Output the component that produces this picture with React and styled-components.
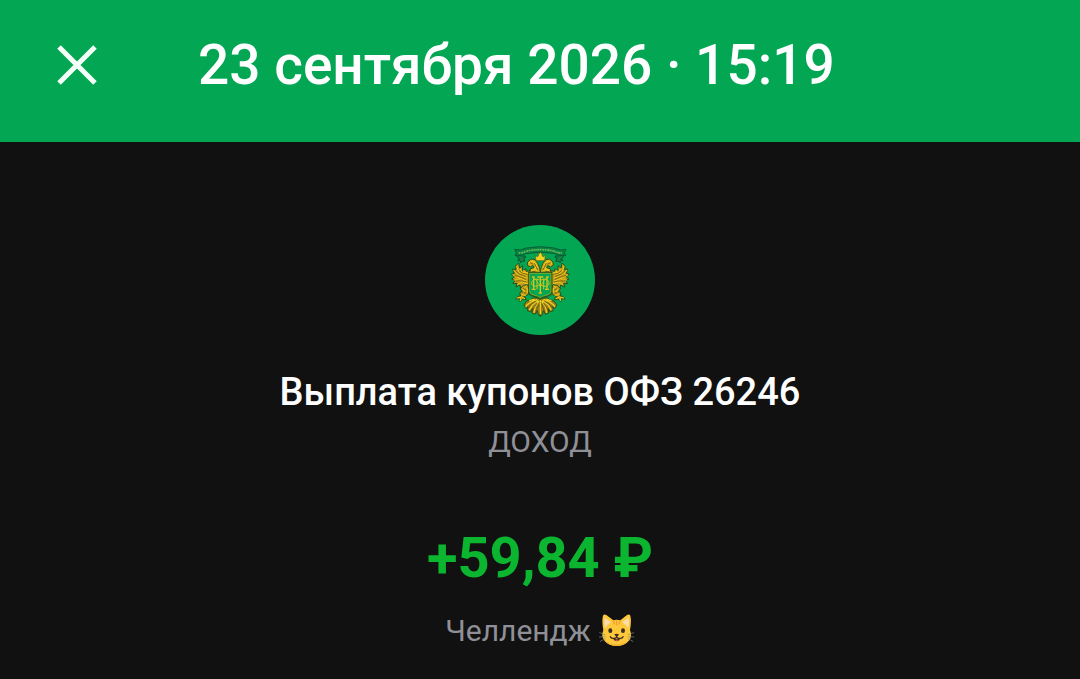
import React from 'react'
import styled, { createGlobalStyle } from 'styled-components'

const GlobalStyle = createGlobalStyle`
  * {
    box-sizing: border-box;
  }
  body {
    margin: 0;
    background: #111111;
    color: #ffffff;
    font-family: Roboto, 'Noto Sans', sans-serif;
  }
`

const Page = styled.div`
  display: flex;
  flex-direction: column;
  min-height: 100vh;
  border-bottom: 1px solid #000000;
`

const Header = styled.header`
  display: flex;
  align-items: center;
  gap: 88px;
  padding: 29px 44px 41px;
  background: #02a653;
`

const CloseButton = styled.button`
  display: flex;
  padding: 12px;
  border: none;
  background: none;
  color: #f4fff9;
  cursor: pointer;
`

const Title = styled.h1`
  margin: 0;
  font-size: 55px;
  font-weight: 500;
  line-height: 72px;
`

const Details = styled.main`
  display: flex;
  flex-direction: column;
  align-items: center;
  padding: 83px 24px 24px;
  text-align: center;
`

const Logo = styled.div`
  display: flex;
  width: 110px;
  height: 110px;
  border-radius: 50%;
  overflow: hidden;
  background: #02a653;
`

const Name = styled.h2`
  margin: 32px 0 0;
  font-size: 38px;
  font-weight: 500;
  line-height: 50px;
`

const Caption = styled.p`
  display: flex;
  align-items: center;
  gap: 8px;
  margin: 0;
  color: #8f9097;
  font-size: 30px;
  line-height: 50px;
`

const Amount = styled.p`
  margin: 55px 0 12px;
  color: #0cb52f;
  font-size: 56px;
  font-weight: 700;
  line-height: 72px;
`

const CloseIcon = () => (
  <svg width="42" height="42" viewBox="0 0 42 42" aria-hidden="true">
    <path d="M3 3L39 39M39 3L3 39" stroke="currentColor" strokeWidth="5" />
  </svg>
)

// one half of the eagle, the other one is mirrored
const EagleHalf = () => (
  <g strokeLinejoin="round" strokeLinecap="round">
    <path
      d="M154 151L139 154L137 146L128 153L128 137L119 145L116 129L107 137L108 149L98 147L103 160L94 162L103 171L95 177L105 181L99 191L111 190L108 201L120 195L122 205L131 198L136 206L148 194Z"
      fill="#c09c1b"
      stroke="#26511c"
      strokeWidth="3"
    />
    <path
      d="M110 139L117 158L139 166M101 151L114 165L139 174M99 165L114 173L139 183M102 180L117 180L142 190M114 193L127 186L144 194M120 146L125 156L143 160M131 151L134 157L148 161"
      fill="none"
      stroke="#edc91d"
      strokeWidth="3"
    />
    <path
      d="M107 152L118 162L136 169M105 167L118 169L137 178M108 183L121 182L139 186M119 153L128 160L142 163"
      fill="none"
      stroke="#5a4512"
      strokeWidth="2"
    />
    <path
      d="M181 160L160 160L149 155L152 146L162 143L159 136L151 141L142 136L143 126L153 117L165 119L173 130L178 142Z"
      fill="#d0ad19"
      stroke="#34501a"
      strokeWidth="3"
    />
    <path
      d="M147 129L156 123L165 128L172 142M155 151L168 149L176 154M168 141L163 147"
      fill="none"
      stroke="#f5d522"
      strokeWidth="3"
    />
    <path d="M151 128L158 132M164 131L173 150M157 155L165 154" fill="none" stroke="#473b12" strokeWidth="2" />
    <path
      d="M142 194L130 196L120 207L127 213L119 219L122 228L113 229L107 237L118 236L120 245L128 237L139 239L133 229L144 224L148 213Z"
      fill="#c09c18"
      stroke="#26511c"
      strokeWidth="3"
    />
    <path
      d="M139 199L127 209L134 213L126 224L137 226M111 234L124 231L134 236M141 205L142 217M121 236L121 242"
      fill="none"
      stroke="#ecca1c"
      strokeWidth="3"
    />
    <path d="M130 205L138 210M127 218L137 219M128 229L137 233" stroke="#57430f" strokeWidth="2" />
    <path
      d="M181 234L158 234L151 241L140 243L132 254L137 265L144 260L142 272L152 275L157 266L156 279L165 283L172 272L175 284L181 288Z"
      fill="#9c8219"
      stroke="#26511c"
      strokeWidth="3"
    />
    <path
      d="M170 239L153 246L142 254L138 260M173 242L157 255L149 269M176 244L166 260L162 277M162 238L149 242M181 240V281"
      fill="none"
      stroke="#f0d020"
      strokeWidth="4"
    />
    <path
      d="M168 244L151 255L145 263M171 250L160 266L157 274M177 252L170 270L168 279"
      fill="none"
      stroke="#584913"
      strokeWidth="2"
    />
    <path
      d="M116 105L112 110L117 116L113 122L122 121L121 128L128 123L134 124L132 115L138 111L132 106"
      fill="#08763e"
      stroke="#075833"
      strokeWidth="3"
    />
    <path d="M118 111L127 116M121 121L130 119" stroke="#39a350" strokeWidth="2" />
  </g>
)

const Emblem = () => (
  <svg width="110" height="110" viewBox="15 15 330 330" role="img" aria-label="Минфин">
    <EagleHalf />
    <g transform="translate(362 0) scale(-1 1)">
      <EagleHalf />
    </g>
    <path
      d="M104 88L121 90L139 84Q181 76 223 84L241 90L258 88L253 98L257 107L237 106L224 101Q181 92 138 101L125 106L105 107L109 98Z"
      fill="#088544"
      stroke="#075e36"
      strokeWidth="3"
      strokeLinejoin="round"
    />
    <path
      d="M116 99L128 98L142 93Q181 85 220 93L234 98L246 99"
      fill="none"
      stroke="#6fbd59"
      strokeWidth="5"
      strokeDasharray="4 2 2 1 5 2"
    />
    <path
      d="M168 122L166 105L172 111L176 105L174 100L178 101L181 97L184 101L188 100L186 105L190 111L196 105L194 122Z"
      fill="#f2d120"
      stroke="#4f661c"
      strokeWidth="2"
    />
    <path
      d="M147 158H215V217Q213 227 198 229Q186 231 181 237Q176 231 164 229Q149 227 147 217Z"
      fill="#02a653"
      stroke="#245b1d"
      strokeWidth="5"
    />
    <path
      d="M149 160H213V216Q211 224 197 226Q186 228 181 233Q176 228 165 226Q151 224 149 216Z"
      fill="#02a653"
      stroke="#bdb01c"
      strokeWidth="2"
    />
    <g fill="none" stroke="#d5c51d" strokeWidth="4">
      <path d="M161 172V207M201 172V207M155 208H167M195 208H207M156 171H164M198 171H206M181 171V219M172 171H190M176 219H186" />
      <path d="M163 173L181 198L199 173" strokeWidth="2" />
      <path
        d="M181 181C172 176 157 176 155 188C154 200 168 202 181 194C194 202 208 200 207 188C205 176 190 176 181 181Z"
        strokeWidth="3"
      />
      <path d="M171 176V208M191 176V208" strokeWidth="3" />
    </g>
  </svg>
)

const CatIcon = () => (
  <svg width="36" height="36" viewBox="0 0 108 108" role="img" aria-label="Кот">
    <path
      d="M13 51Q8 25 12 8Q15 2 22 6L43 22Q53 19 64 22L84 6Q91 2 94 8Q98 24 93 51Q101 70 89 84Q76 99 53 99Q30 99 17 84Q5 69 13 51Z"
      fill="#fdc839"
    />
    <path d="M18 14L36 28Q24 35 18 46Q14 26 18 14ZM88 14L70 28Q82 35 88 46Q92 26 88 14Z" fill="#ffdcae" />
    <path d="M17 82Q30 94 53 94Q76 94 89 82Q78 99 53 99Q28 99 17 82Z" fill="#f0b030" />
    <path
      d="M53 22V36M43 24L46 33M63 24L60 33"
      stroke="#f5a032"
      strokeWidth="4"
      strokeLinecap="round"
    />
    <ellipse cx="34" cy="53" rx="6" ry="7" fill="#3b2d22" />
    <ellipse cx="72" cy="53" rx="6" ry="7" fill="#3b2d22" />
    <path d="M43 76Q53 80 63 76Q61 85 53 85Q45 85 43 76Z" fill="#4a2422" />
    <path d="M48 81Q53 78 58 81Q57 84 53 84Q49 84 48 81Z" fill="#e2606a" />
    <path
      d="M53 67V73Q47 79 38 75Q35 74 34 71M53 73Q59 79 68 75Q71 74 72 71"
      fill="none"
      stroke="#3b2d22"
      strokeWidth="4"
      strokeLinecap="round"
    />
    <path d="M46 64Q53 60 60 64Q58 70 53 71Q48 70 46 64Z" fill="#3b2d22" />
    <path
      d="M2 59L18 65M1 72L18 71M4 85L19 77M104 59L88 65M105 72L88 71M102 85L87 77"
      stroke="#85897c"
      strokeWidth="2"
      strokeLinecap="round"
    />
  </svg>
)

const App = () => {
  return (
    <Page>
      <GlobalStyle />
      <Header>
        <CloseButton type="button" aria-label="Закрыть">
          <CloseIcon />
        </CloseButton>
        <Title>23 сентября 2026 · 15:19</Title>
      </Header>
      <Details>
        <Logo>
          <Emblem />
        </Logo>
        <Name>Выплата купонов ОФЗ 26246</Name>
        <Caption>ДОХОД</Caption>
        <Amount>+59,84 ₽</Amount>
        <Caption>
          Челлендж
          <CatIcon />
        </Caption>
      </Details>
    </Page>
  )
}

export default App
